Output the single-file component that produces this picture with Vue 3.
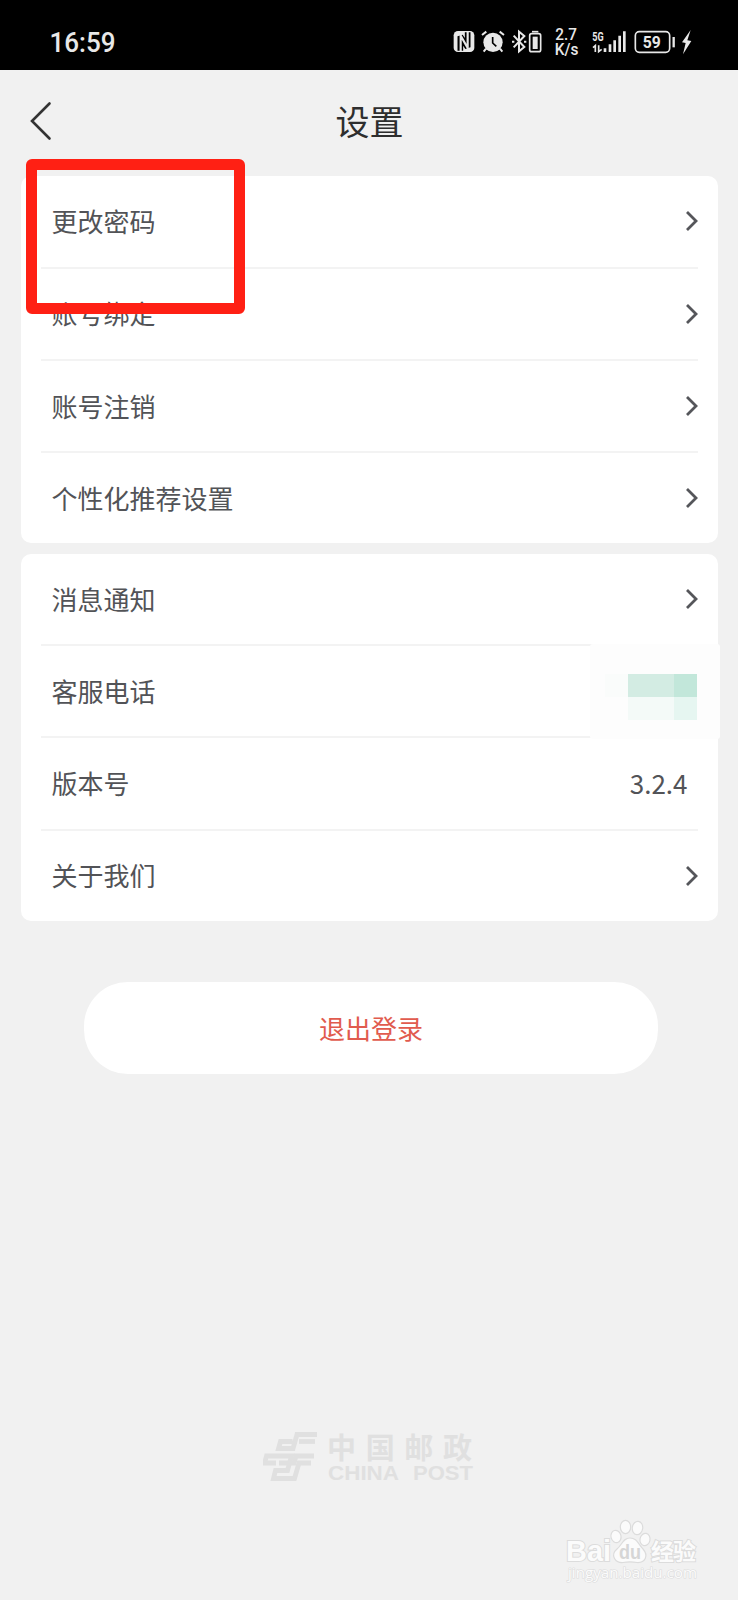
<template>
	<div class="screen">
		<header class="status-bar">
			<svg class="clock" width="72" height="34" viewBox="0 0 72 34">
				<text x="0.5" y="25" textLength="66" lengthAdjust="spacingAndGlyphs">16:59</text>
			</svg>
			<svg class="status-icons" width="240" height="34" viewBox="40 30 720 102">
				<!-- nfc -->
				<rect x="42" y="48" width="62" height="63" rx="13" fill="#e8e8e8" />
				<path d="M62 107V64L84 97V52" fill="none" stroke="#000" stroke-width="17" stroke-linejoin="bevel" />
				<path d="M63 110V62L84 99V48" fill="none" stroke="#e8e8e8" stroke-width="6.5" />
				<!-- alarm -->
				<circle cx="160" cy="82" r="29" fill="#e8e8e8" />
				<path d="M127 60L140 50M180 50L193 60M139 101L132 110M181 101L188 110" fill="none" stroke="#e8e8e8" stroke-width="6" />
				<path d="M159 66V84L170 94" fill="none" stroke="#000" stroke-width="5" />
				<!-- bluetooth and its battery -->
				<path d="M222 62L254 96L238 109V50L254 63L222 97" fill="none" stroke="#e8e8e8" stroke-width="6" />
				<path d="M217 80h7M253 80h7" stroke="#e8e8e8" stroke-width="6" />
				<rect x="270" y="56" width="33" height="54" rx="6" fill="none" stroke="#e8e8e8" stroke-width="5" />
				<path d="M277 50h19" stroke="#e8e8e8" stroke-width="5" />
				<rect x="279" y="65" width="15" height="37" fill="#e8e8e8" />
				<!-- network speed -->
				<text x="347" y="76" font-size="47" font-weight="500" textLength="65" lengthAdjust="spacingAndGlyphs">2.7</text>
				<text x="345" y="119" font-size="47" font-weight="500" textLength="71" lengthAdjust="spacingAndGlyphs">K/s</text>
				<!-- signal -->
				<text x="458" y="77" font-size="36" font-weight="700" textLength="34" lengthAdjust="spacingAndGlyphs">5G</text>
				<path d="M460 98L467 92V111M477 91V110L486 103" fill="none" stroke="#e8e8e8" stroke-width="5" />
				<path d="M496 100V111M511 88V111M525 76V111M540 62V111M554 49V111" stroke="#e8e8e8" stroke-width="8" />
				<!-- battery -->
				<rect x="587" y="50" width="103" height="62" rx="12" fill="none" stroke="#e8e8e8" stroke-width="5" />
				<text x="609" y="98" font-size="48" font-weight="700" textLength="54" lengthAdjust="spacingAndGlyphs">59</text>
				<path d="M702 66V97" stroke="#e8e8e8" stroke-width="7" />
				<path d="M753 45L727 82L738 84L730 118L755 78L743 76Z" fill="#e8e8e8" />
			</svg>
		</header>

		<nav class="title-bar">
			<svg class="back" width="24" height="40" viewBox="0 0 24 40">
				<path d="M20.5 2.5L3 20L20.5 37.5" fill="none" stroke="#333" stroke-width="2.6" stroke-linecap="round" />
			</svg>
			<h1>设置</h1>
		</nav>

		<main>
			<section v-for="(group, i) in groups" :key="i" class="card">
				<div v-for="item in group" :key="item.label" class="row">
					<span class="label">{{ item.label }}</span>
					<span v-if="item.value" class="value">{{ item.value }}</span>
					<div v-else-if="item.masked" class="mask">
						<div class="mosaic">
							<i></i><i></i><i></i>
							<i></i><i></i><i></i>
						</div>
					</div>
					<svg v-else class="arrow" width="13" height="22" viewBox="0 0 13 22">
						<path d="M2 2L11 11L2 20" fill="none" stroke="#55565a" stroke-width="2.8" />
					</svg>
				</div>
			</section>
			<button class="logout">退出登录</button>
		</main>

		<footer>
			<svg width="216" height="60" viewBox="0 0 216 60">
				<g fill="none" stroke="#e0e0e0" stroke-width="4.8">
					<path d="M54 3.5H34L30 17.5H15.5L17.5 10.5H29.5" />
					<path d="M52 10.5H36" />
					<path d="M13 32H1.5L3.5 25H28.5L24.5 39.5H12.5L10.5 47.5H31.5L36 32H48" />
					<path d="M51 25H33L31 32H16" />
				</g>
				<text class="post-cn" x="64" y="28" textLength="145">中国邮政</text>
				<text class="post-en" x="65" y="49" textLength="71" lengthAdjust="spacingAndGlyphs">CHINA</text>
				<text class="post-en" x="150" y="49" textLength="60" lengthAdjust="spacingAndGlyphs">POST</text>
			</svg>
		</footer>

		<div class="highlight"></div>

		<svg class="watermark" width="136" height="76" viewBox="0 0 136 76">
			<g fill="#fbfbfb" stroke="#dcdcdc" stroke-width="1.2">
				<ellipse cx="51" cy="21.5" rx="5" ry="6.2" transform="rotate(-15 51 21.5)" />
				<ellipse cx="60.5" cy="12" rx="5.2" ry="6.7" />
				<ellipse cx="72.5" cy="13" rx="5.2" ry="6.7" transform="rotate(8 72.5 13)" />
				<ellipse cx="80" cy="24.5" rx="5" ry="6.2" transform="rotate(12 80 24.5)" />
				<path d="M65 23C58 23 57 30 52 34C45 40 50 48 58 47.5C63 46.5 67 46.5 72 47.5C80 48 84 41 78 34C73 29 72 23 65 23Z" />
			</g>
			<g class="wm-text">
				<text x="1" y="46" font-size="29" font-weight="700" textLength="45" lengthAdjust="spacingAndGlyphs">Bai</text>
				<text class="du" x="54" y="43.5" font-size="20" textLength="22" lengthAdjust="spacingAndGlyphs">du</text>
				<text class="cn" x="86" y="45" font-size="23" textLength="45">经验</text>
				<text class="url" x="3" y="63" font-size="15" textLength="129" lengthAdjust="spacingAndGlyphs">jingyan.baidu.com</text>
			</g>
		</svg>
	</div>
</template>

<script setup>
const groups = [
	[
		{ label: '更改密码' },
		{ label: '账号绑定' },
		{ label: '账号注销' },
		{ label: '个性化推荐设置' },
	],
	[
		{ label: '消息通知' },
		{ label: '客服电话', masked: true },
		{ label: '版本号', value: '3.2.4' },
		{ label: '关于我们' },
	],
];
</script>

<style>
body {
	margin: 0;
	background: #f1f1f1;
}
</style>

<style scoped>
.screen {
	position: relative;
	display: flex;
	flex-direction: column;
	width: 738px;
	height: 1600px;
	overflow: hidden;
	background: #f1f1f1;
	font-family: 'Noto Sans CJK SC', sans-serif;
	color: #525357;
}

.status-bar {
	display: flex;
	justify-content: space-between;
	align-items: flex-start;
	height: 69.5px;
	box-sizing: border-box;
	padding: 25px 44.7px 0 49px;
	background: #000;
}

.status-bar text {
	fill: #e8e8e8;
	font-family: Roboto, sans-serif;
}

.clock {
	margin-top: 2px;
}

.clock text {
	font-size: 28px;
	font-weight: 500;
}

.title-bar {
	position: relative;
	display: flex;
	justify-content: center;
	align-items: center;
	height: 106.8px;
	box-sizing: border-box;
	padding: 0 0 3.8px 1px;
}

.back {
	position: absolute;
	left: 28.5px;
	top: 31px;
}

h1 {
	margin: 0;
	font-size: 34px;
	font-weight: 400;
	line-height: 50px;
	color: #2e2e2e;
}

main {
	display: flex;
	flex-direction: column;
	gap: 10.5px;
	padding: 0 20.5px;
}

.card {
	height: 367px;
	padding: 0 20px;
	box-sizing: border-box;
	border-radius: 10px;
	background: #fff;
}

.row {
	display: flex;
	justify-content: space-between;
	align-items: center;
	height: 92.25px;
	box-sizing: border-box;
	padding: 0 0 0 11px;
	border-bottom: 2px solid #f3f3f3;
	font-size: 26px;
	line-height: 38px;
}

.row:last-child {
	height: 90.25px;
	border-bottom: 0;
}

.label,
.value {
	padding-bottom: 0.6px;
}

.value {
	padding-right: 10px;
}

/* hides the number and spills slightly over the card edge */
.mask {
	display: flex;
	align-items: center;
	justify-content: flex-end;
	width: 130px;
	height: 95px;
	box-sizing: border-box;
	margin-right: -22.5px;
	padding: 12px 23px 0 0;
	border-radius: 3px;
	background: #fdfdfd;
}

.mosaic {
	display: grid;
	grid-template-columns: 23px 46px 23px;
	grid-template-rows: 23px 23px;
}

.mosaic i:nth-child(1) {
	background: #fafcfb;
}

.mosaic i:nth-child(2) {
	background: #d3ece3;
}

.mosaic i:nth-child(3) {
	background: #c2e7da;
}

.mosaic i:nth-child(5) {
	background: #f4faf8;
}

.mosaic i:nth-child(6) {
	background: #e6f6f1;
}

.logout {
	align-self: center;
	width: 574px;
	height: 92px;
	margin: 51.2px 0 0 4px;
	padding: 0 0 2px;
	border: 0;
	border-radius: 44px;
	background: #fff;
	color: #e15b4e;
	font-family: inherit;
	font-size: 26px;
}

footer {
	display: flex;
	justify-content: center;
	margin-top: auto;
	padding: 0 0 109px 4px;
}

footer text {
	fill: #e0e0e0;
}

.post-cn {
	font-size: 29px;
	font-weight: 700;
}

.post-en {
	font-family: 'Liberation Sans', sans-serif;
	font-size: 20px;
	font-weight: 700;
}

.highlight {
	position: absolute;
	left: 26px;
	top: 159px;
	width: 219px;
	height: 155px;
	box-sizing: border-box;
	border: 11px solid #ff2014;
	border-radius: 6px;
}

.watermark {
	position: absolute;
	left: 565px;
	top: 1515px;
}

.wm-text text {
	fill: #fbfbfb;
	stroke: #dcdcdc;
	stroke-width: 2px;
	paint-order: stroke;
	font-family: 'Liberation Sans', sans-serif;
}

.wm-text .du {
	fill: #d6d6d6;
	stroke: none;
	font-weight: 700;
}

.wm-text .cn {
	font-family: 'Noto Sans CJK SC', sans-serif;
	font-weight: 700;
}

.wm-text .url {
	stroke-width: 1.2px;
	font-family: 'Open Sans', sans-serif;
}
</style>
